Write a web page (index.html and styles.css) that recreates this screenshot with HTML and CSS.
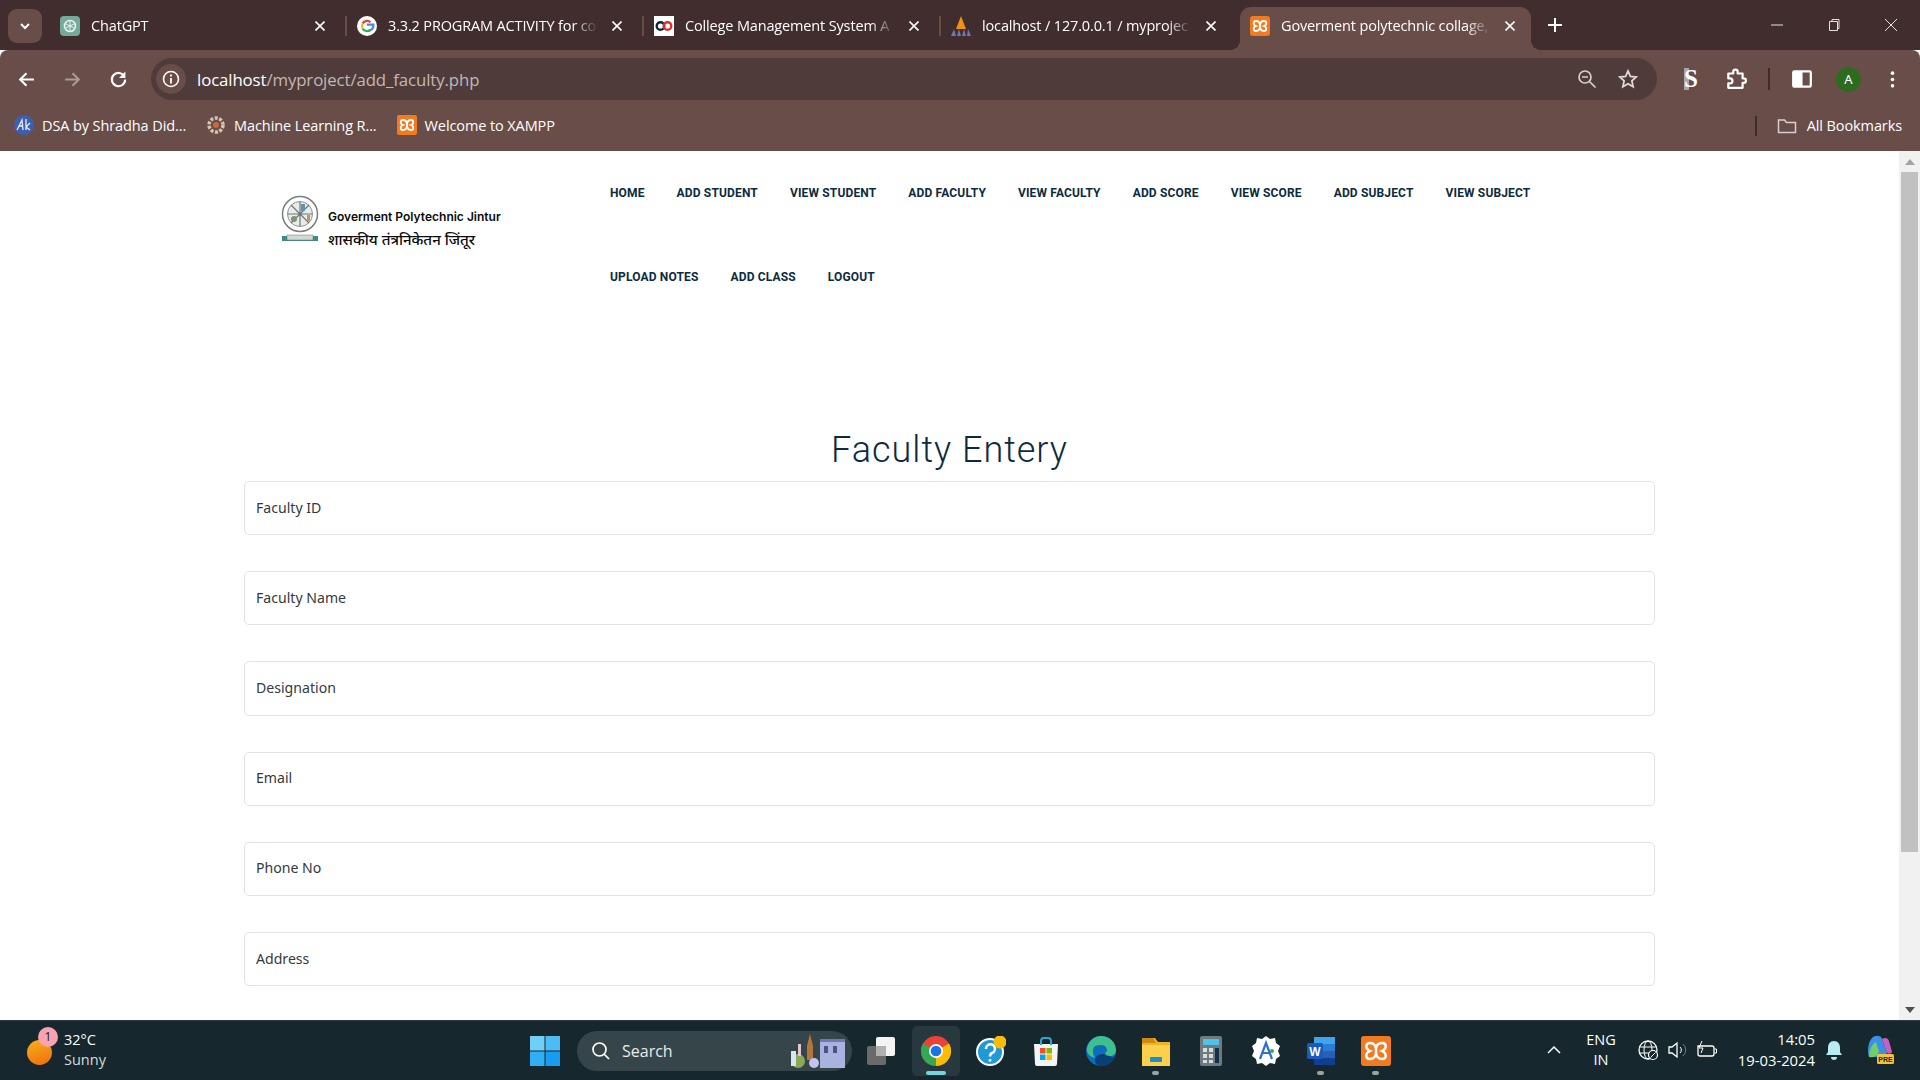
FILE: index.html
```html
<!DOCTYPE html>
<html lang="en">

<head>
  <meta charset="UTF-8">
  <meta name="viewport" content="width=device-width, initial-scale=1.0">
  <title>Faculty Entery</title>
  <link rel="stylesheet" href="styles.css">
</head>

<body>
  <div class="tabstrip">
    <div class="tab-search">
      <svg width="12" height="12" viewBox="0 0 12 12"><path d="M2 4l4 4 4-4" fill="none" stroke="#fff" stroke-width="2"/></svg>
    </div>
    <div class="tab">
      <svg class="fav" viewBox="0 0 20 20"><rect width="20" height="20" rx="4" fill="#74aa9c"/><circle cx="10" cy="10" r="5.500" fill="none" stroke="#e8f2ef" stroke-width="1.600"/><path d="M10 4.500v11M5 7.500l10 5M15 7.500l-10 5" stroke="#e8f2ef" stroke-width="1"/></svg>
      <span class="tab-title">ChatGPT</span>
      <svg class="tab-close" viewBox="0 0 10 10"><path d="M.5.500l9 9M9.500.500l-9 9" stroke="#fff" stroke-width="1.600"/></svg>
    </div>
    <div class="tab sep">
      <svg class="fav" viewBox="0 0 20 20"><circle cx="10" cy="10" r="10" fill="#fff"/><path d="M10 8.600h6.400c.4 3.800-2.400 6.400-6.200 6.400" fill="none" stroke="#4285f4" stroke-width="2.200"/><path d="M5.600 7.600A5 5 0 0 1 13.600 6.300" fill="none" stroke="#ea4335" stroke-width="2.200"/><path d="M5.600 7.600a5 5 0 0 0 0 4.800" fill="none" stroke="#fbbc05" stroke-width="2.200"/><path d="M5.600 12.400a5 5 0 0 0 7.800 1.400" fill="none" stroke="#34a853" stroke-width="2.200"/></svg>
      <span class="tab-title">3.3.2 PROGRAM ACTIVITY for co</span>
      <svg class="tab-close" viewBox="0 0 10 10"><path d="M.5.500l9 9M9.500.500l-9 9" stroke="#fff" stroke-width="1.600"/></svg>
    </div>
    <div class="tab sep">
      <svg class="fav" viewBox="0 0 20 20"><rect width="20" height="20" fill="#fff"/><circle cx="6.500" cy="10" r="3.800" fill="none" stroke="#10233f" stroke-width="2.400"/><circle cx="13.500" cy="10" r="3.800" fill="none" stroke="#d9302c" stroke-width="2.400"/></svg>
      <span class="tab-title">College Management System A</span>
      <svg class="tab-close" viewBox="0 0 10 10"><path d="M.5.500l9 9M9.500.500l-9 9" stroke="#fff" stroke-width="1.600"/></svg>
    </div>
    <div class="tab sep">
      <svg class="fav" viewBox="0 0 20 20"><path d="M10 0l5 13H5z" fill="#f29111"/><path d="M0 20l3-7 2 7zM6 20l2-7 2 7zM11 20l2-7 2 7zM16 20l1-7 3 7z" fill="#6c78af"/></svg>
      <span class="tab-title">localhost / 127.0.0.1 / myprojec</span>
      <svg class="tab-close" viewBox="0 0 10 10"><path d="M.5.500l9 9M9.500.500l-9 9" stroke="#fff" stroke-width="1.600"/></svg>
    </div>
    <div class="tab active">
      <svg class="fav" viewBox="0 0 20 20"><rect width="20" height="20" rx="3" fill="#f47a20"/><path d="M6 5c4 0 4 4 4 5s0 5 4 5M14 5c-4 0-4 4-4 5s0 5-4 5M6 5C3 5 3 9 6 10c-3 1-3 5 0 5M14 5c3 0 3 4 0 5 3 1 3 5 0 5" fill="none" stroke="#fff" stroke-width="1.800"/></svg>
      <span class="tab-title">Goverment polytechnic collage,</span>
      <svg class="tab-close" viewBox="0 0 10 10"><path d="M.5.500l9 9M9.500.500l-9 9" stroke="#fff" stroke-width="1.600"/></svg>
    </div>
    <div class="new-tab">
      <svg width="14" height="14" viewBox="0 0 14 14"><path d="M7 0v14M0 7h14" stroke="#fff" stroke-width="2"/></svg>
    </div>
    <div class="win-controls">
      <svg width="14" height="14" viewBox="0 0 14 14"><path d="M1 7h12" stroke="#e8e0df" stroke-width="1"/></svg>
      <svg width="14" height="14" viewBox="0 0 14 14"><path d="M2.500 3.500h8v9h-8zM5 3.500V1.500h7v9h-1.500" fill="none" stroke="#e8e0df" stroke-width="1"/></svg>
      <svg width="14" height="14" viewBox="0 0 14 14"><path d="M1 1l12 12M13 1L1 13" stroke="#e8e0df" stroke-width="1"/></svg>
    </div>
  </div>

  <div class="toolbar">
    <svg class="tool-icon" viewBox="0 0 18 18"><path d="M16 9H3M9 3L3 9l6 6" fill="none" stroke="#fff" stroke-width="2"/></svg>
    <svg class="tool-icon" viewBox="0 0 18 18"><path d="M2 9h13M9 3l6 6-6 6" fill="none" stroke="#a79a97" stroke-width="2"/></svg>
    <svg class="tool-icon reload" viewBox="0 0 18 18"><path d="M14.500 6A6.300 6.300 0 1 0 15.300 9" fill="none" stroke="#fff" stroke-width="2"/><path d="M15.500 1.500v6h-6z" fill="#fff"/></svg>
    <div class="omnibox">
      <div class="site-info">
        <svg width="18" height="18" viewBox="0 0 18 18"><circle cx="9" cy="9" r="7.500" fill="none" stroke="#fff" stroke-width="1.600"/><path d="M9 8v5.500M9 4.500v2" stroke="#fff" stroke-width="1.800"/></svg>
      </div>
      <div class="url"><span class="url-host">localhost</span>/myproject/add_faculty.php</div>
      <svg class="omni-icon" viewBox="0 0 20 20"><circle cx="8" cy="8" r="6" fill="none" stroke="#d8d0ce" stroke-width="1.700"/><path d="M12.500 12.500l6 6M5 8h6" stroke="#d8d0ce" stroke-width="1.700"/></svg>
      <svg class="omni-icon" viewBox="0 0 20 20"><path d="M10 2l2.400 5.400 5.800.6-4.300 3.900 1.200 5.800L10 14.700l-5.100 3 1.200-5.800L1.800 8l5.800-.6z" fill="none" stroke="#e0d8d6" stroke-width="1.800"/></svg>
    </div>
    <div class="toolbar-right">
      <span class="ext-s">S</span>
      <svg class="tool-icon puzzle" viewBox="0 0 20 20"><path d="M3 5h4.500V3.500a2 2 0 0 1 4 0V5H16v4.500h1a2 2 0 0 1 0 4h-1V18H3v-4h1.500a2.200 2.200 0 0 0 0-4.500H3z" fill="none" stroke="#fff" stroke-width="2" stroke-linejoin="round"/></svg>
      <span class="tool-sep"></span>
      <svg class="tool-icon panel" viewBox="0 0 20 20"><rect x="2" y="3" width="16" height="14" rx="1" fill="none" stroke="#fff" stroke-width="2"/><rect x="2" y="3" width="8.500" height="14" fill="#fff"/></svg>
      <span class="avatar">A</span>
      <svg class="tool-icon dots" viewBox="0 0 18 18"><circle cx="9" cy="3" r="1.700" fill="#fff"/><circle cx="9" cy="9" r="1.700" fill="#fff"/><circle cx="9" cy="15" r="1.700" fill="#fff"/></svg>
    </div>
  </div>

  <div class="bookmarks">
    <div class="bookmark">
      <svg class="fav" viewBox="0 0 20 20"><circle cx="10" cy="10" r="10" fill="#3d5fb0"/><path d="M3 15L8 5l1 10M5 11h4M12 4v11M16 8l-4 4 4 3" fill="none" stroke="#e8ecf6" stroke-width="1.300"/></svg>
      <span>DSA by Shradha Did...</span>
    </div>
    <div class="bookmark">
      <svg class="fav" viewBox="0 0 20 20"><circle cx="10" cy="10" r="7" fill="none" stroke="#d6c6b8" stroke-width="3.500" stroke-dasharray="3 1.500"/><circle cx="10" cy="10" r="3" fill="#c96a3a"/></svg>
      <span>Machine Learning R...</span>
    </div>
    <div class="bookmark">
      <svg class="fav" viewBox="0 0 20 20"><rect width="20" height="20" rx="2" fill="#f47a20"/><path d="M6 5c4 0 4 4 4 5s0 5 4 5M14 5c-4 0-4 4-4 5s0 5-4 5M6 5C3 5 3 9 6 10c-3 1-3 5 0 5M14 5c3 0 3 4 0 5 3 1 3 5 0 5" fill="none" stroke="#fff" stroke-width="1.800"/></svg>
      <span>Welcome to XAMPP</span>
    </div>
    <div class="all-bookmarks">
      <span class="bm-sep"></span>
      <svg width="20" height="20" viewBox="0 0 20 20"><path d="M1.500 4h6l2 2.500h9v10h-17z" fill="none" stroke="#d8d0ce" stroke-width="1.500"/></svg>
      <span>All Bookmarks</span>
    </div>
  </div>

  <div class="viewport">
    <main class="page">
      <header class="site-header">
        <div class="brand">
          <svg class="emblem" viewBox="0 0 38 48">
            <circle cx="19" cy="19" r="17.500" fill="#fff" stroke="#77807c" stroke-width="1.500"/>
            <circle cx="19" cy="19" r="12.500" fill="#e9ecea" stroke="#8b928e" stroke-width="1"/>
            <path d="M19 7v24M7 19h24M10 10l18 18M28 10L10 28" stroke="#6d7773" stroke-width="1.200"/>
            <circle cx="13" cy="24" r="3" fill="#7f9270"/>
            <rect x="20" y="9" width="4" height="7" fill="#5b93b5"/>
            <rect x="26" y="20" width="3" height="6" fill="#b99c5c"/>
            <path d="M1 41h36v5H1z" fill="#3f8a86"/>
            <rect x="6" y="40" width="26" height="5" fill="#d5d8d4" stroke="#6d7773" stroke-width=".5"/>
          </svg>
          <div class="brand-text">
            <div class="brand-en">Goverment Polytechnic Jintur</div>
            <div class="brand-hi">शासकीय तंत्रनिकेतन जिंतूर</div>
          </div>
        </div>
        <nav class="main-nav">
          <a href="#">Home</a>
          <a href="#">Add Student</a>
          <a href="#">View Student</a>
          <a href="#">Add Faculty</a>
          <a href="#">View Faculty</a>
          <a href="#">Add Score</a>
          <a href="#">View Score</a>
          <a href="#">Add Subject</a>
          <a href="#">View Subject</a>
          <a href="#">Upload Notes</a>
          <a href="#">Add Class</a>
          <a href="#">Logout</a>
        </nav>
      </header>

      <h1 class="form-title">Faculty Entery</h1>

      <form class="entry-form">
        <input class="form-control" type="text" placeholder="Faculty ID">
        <input class="form-control" type="text" placeholder="Faculty Name">
        <input class="form-control" type="text" placeholder="Designation">
        <input class="form-control" type="text" placeholder="Email">
        <input class="form-control" type="text" placeholder="Phone No">
        <input class="form-control" type="text" placeholder="Address">
      </form>
    </main>

    <div class="scrollbar">
      <div class="scroll-btn"><svg width="10" height="6" viewBox="0 0 10 6"><path d="M5 0l5 6H0z" fill="#a3a3a3"/></svg></div>
      <div class="scroll-track"><div class="scroll-thumb"></div></div>
      <div class="scroll-btn"><svg width="10" height="6" viewBox="0 0 10 6"><path d="M5 6l5-6H0z" fill="#505050"/></svg></div>
    </div>
  </div>

  <footer class="taskbar">
    <div class="weather">
      <div class="weather-icon"><span class="weather-badge">1</span></div>
      <div>
        <div>32°C</div>
        <div class="weather-sub">Sunny</div>
      </div>
    </div>

    <div class="task-center">
      <svg class="task-icon" viewBox="0 0 30 30"><rect width="14.500" height="14.500" fill="#6fd0f7"/><rect x="15.500" width="14.500" height="14.500" fill="#4cbcf5"/><rect y="15.500" width="14.500" height="14.500" fill="#2fb0f5"/><rect x="15.500" y="15.500" width="14.500" height="14.500" fill="#169cf0"/></svg>
      <div class="search-pill">
        <svg width="20" height="20" viewBox="0 0 20 20"><circle cx="8.500" cy="8.500" r="6.500" fill="none" stroke="#fff" stroke-width="1.700"/><path d="M13 13l5 5" stroke="#fff" stroke-width="1.700"/></svg>
        <span class="search-label">Search</span>
        <svg class="search-art" width="64" height="34" viewBox="0 0 64 34"><rect x="37" y="6" width="25" height="28" fill="#aab2e0"/><path d="M37 5h25v3H37z" fill="#6e7ab0"/><path d="M41 12h4v7h-4zM50 12h4v7h-4z" fill="#4a5480"/><path d="M27 0l3 12v14h-6V12z" fill="#b5763a"/><circle cx="15" cy="27" r="7" fill="#8aa95a"/><circle cx="31" cy="29" r="5" fill="#c4c4ef"/><rect x="8" y="17" width="5" height="15" fill="#dde3f4"/><rect x="15" y="10" width="3" height="12" fill="#e6c3d4"/></svg>
      </div>
      <div class="task-app">
        <svg class="task-icon" viewBox="0 0 30 30"><rect x="1" y="10" width="19" height="19" rx="2" fill="#6a6a6a"/><rect x="10" y="1" width="19" height="19" rx="2" fill="#f4f4f4"/><rect x="10" y="10" width="10" height="10" fill="#b0b0b0"/></svg>
      </div>
      <div class="task-app current">
        <svg class="task-icon" viewBox="0 0 30 30"><circle cx="15" cy="15" r="15" fill="#ea4335"/><path d="M15 15L28 7.500A15 15 0 0 1 15 30z" fill="#fbbc05"/><path d="M15 15v15A15 15 0 0 1 2 7.500z" fill="#34a853"/><circle cx="15" cy="15" r="7" fill="#fff"/><circle cx="15" cy="15" r="5.300" fill="#1a73e8"/></svg>
      </div>
      <div class="task-app">
        <svg class="task-icon" viewBox="0 0 30 30"><circle cx="14" cy="16" r="13" fill="#1f9ad6" stroke="#fff" stroke-width="2"/><path d="M10 13a4.500 4.500 0 1 1 6 4c-1.500.7-2 1.500-2 3.500M14 23v2.500" fill="none" stroke="#fff" stroke-width="2.500"/><circle cx="24" cy="6" r="6.500" fill="#fbbc05"/></svg>
      </div>
      <div class="task-app">
        <svg class="task-icon" viewBox="0 0 30 30"><path d="M3 8h24l-1 20a2 2 0 0 1-2 2H6a2 2 0 0 1-2-2z" fill="#f4f4f4"/><path d="M10 9V5a3 3 0 0 1 3-3h4a3 3 0 0 1 3 3v4" fill="none" stroke="#27a7d8" stroke-width="2"/><rect x="9" y="12" width="5.500" height="5.500" fill="#f25022"/><rect x="15.500" y="12" width="5.500" height="5.500" fill="#7fba00"/><rect x="9" y="18.500" width="5.500" height="5.500" fill="#00a4ef"/><rect x="15.500" y="18.500" width="5.500" height="5.500" fill="#ffb900"/></svg>
      </div>
      <div class="task-app">
        <svg class="task-icon" viewBox="0 0 30 30"><circle cx="15" cy="15" r="15" fill="#0f6cbd"/><path d="M30 17c-1 8-7 13-14 13-4 0-7-2-7-6 0-3 3-6 8-6 4 0 6 1 8 3 3 1 4-2 5-4z" fill="#0b3f78"/><path d="M1 12C3 4 9 0 15 0c8 0 15 6 15 14 0 4-3 6-6 6-3 0-5-1-5-3 4-1 2-8-4-8S7 11 7 15c0 2 .500 5 2 7C4 21 0 17 1 12z" fill="#3dc08e"/></svg>
      </div>
      <div class="task-app dot">
        <svg class="task-icon" viewBox="0 0 30 30"><path d="M1 2h13l3 4h12v24H1z" fill="#f0b429"/><path d="M1 2h11l3 5H1z" fill="#d08a14"/><rect x="1" y="9" width="28" height="21" fill="#fbd04b"/><rect x="9" y="21" width="12" height="5" rx="1" fill="#1b8ed1"/></svg>
      </div>
      <div class="task-app">
        <svg class="task-icon" viewBox="0 0 30 30"><rect x="4" y="0" width="22" height="30" rx="2" fill="#6e7a80"/><rect x="7" y="3" width="16" height="6" fill="#4cc3e8"/><path d="M7 12h4v4H7zM13 12h4v4h-4zM7 18h4v4H7zM13 18h4v4h-4zM7 24h4v3H7zM13 24h4v3h-4z" fill="#d9dcde"/><rect x="19" y="12" width="4" height="15" fill="#11314a"/></svg>
      </div>
      <div class="task-app">
        <svg class="task-icon" viewBox="0 0 30 30"><path d="M15 0l4 3 5-1 1 5 4 3-2 5 2 5-4 3-1 5-5-1-4 3-4-3-5 1-1-5-4-3 2-5-2-5 4-3 1-5 5 1z" fill="#fff"/><circle cx="15" cy="15" r="10" fill="#fff"/><path d="M9 23l6-16 6 16M11 17h8" fill="none" stroke="#2f6fd0" stroke-width="2.200"/><circle cx="21" cy="15" r="2" fill="#3aa655"/></svg>
      </div>
      <div class="task-app dot">
        <svg class="task-icon" viewBox="0 0 30 30"><rect x="8" y="1" width="21" height="28" rx="2" fill="#2b7cd3"/><rect x="8" y="1" width="21" height="7" fill="#41a5ee"/><rect x="8" y="15" width="21" height="7" fill="#2b5fb3"/><rect x="8" y="22" width="21" height="7" fill="#103f91"/><rect x="1" y="7" width="16" height="16" rx="1.500" fill="#185abd"/><text x="9" y="19.500" text-anchor="middle" class="word-w">W</text></svg>
      </div>
      <div class="task-app dot">
        <svg class="task-icon" viewBox="0 0 30 30"><rect width="30" height="30" rx="3" fill="#f47a20"/><path d="M9 7c6 0 6 5 6 8s0 8 6 8M21 7c-6 0-6 5-6 8s0 8-6 8M9 7c-5 0-5 6 0 8-5 2-5 8 0 8M21 7c5 0 5 6 0 8 5 2 5 8 0 8" fill="none" stroke="#fff" stroke-width="2.400"/></svg>
      </div>
    </div>

    <div class="tray">
      <svg class="tray-chevron" width="14" height="10" viewBox="0 0 14 10"><path d="M1 8l6-6 6 6" fill="none" stroke="#fff" stroke-width="1.500"/></svg>
      <div class="lang">ENG<br>IN</div>
      <svg width="22" height="22" viewBox="0 0 22 22"><circle cx="11" cy="11" r="9" fill="none" stroke="#fff" stroke-width="1.300"/><ellipse cx="11" cy="11" rx="4" ry="9" fill="none" stroke="#fff"/><path d="M2 8h18M2 14h18" stroke="#fff"/><circle cx="16" cy="16" r="4.500" fill="#16282e" stroke="#fff" stroke-width="1.200"/><path d="M13.500 18.500l5-5" stroke="#fff"/></svg>
      <svg width="20" height="20" viewBox="0 0 20 20"><path d="M2 7h3l5-4v14l-5-4H2z" fill="none" stroke="#fff" stroke-width="1.300"/><path d="M13 7a4 4 0 0 1 0 6" fill="none" stroke="#fff"/><path d="M16 4a8 8 0 0 1 0 12" fill="none" stroke="#6b7a7e"/></svg>
      <svg width="22" height="20" viewBox="0 0 22 20"><path d="M3 6h14a2 2 0 0 1 2 2v6a2 2 0 0 1-2 2H5a2 2 0 0 1-2-2z" fill="none" stroke="#fff" stroke-width="1.300"/><path d="M19.500 9h2v4h-2M7 1L4 8h4l-2 5" fill="none" stroke="#fff"/></svg>
      <div class="clock">14:05<br>19-03-2024</div>
      <svg width="20" height="22" viewBox="0 0 20 22"><path d="M10 2c4 0 6 3 6 7v4l2 3H2l2-3V9c0-4 2-7 6-7z" fill="#b6ecf2"/><path d="M7 18a3 3 0 0 0 6 0z" fill="#b6ecf2"/></svg>
      <svg class="copilot" width="32" height="32" viewBox="0 0 32 32"><path d="M8 4c3-3 9-3 10 1l5 14c-2 4-6 5-10 4H5C3 18 4 8 8 4z" fill="#3b8fe6"/><path d="M18 5c3-2 6-1 7 2l3 11c-1 2-3 2-5 1z" fill="#c65fc0"/><path d="M5 23c0-7 3-13 7-15l3 10c-2 4-5 6-10 5z" fill="#6fd06a"/><rect x="13" y="20" width="17" height="10" rx="1.500" fill="#f4c430"/><text x="21.500" y="28" text-anchor="middle" class="copilot-pre">PRE</text></svg>
    </div>
  </footer>
</body>

</html>
```

FILE: styles.css
```css
html,
body {
  height: 100%;
}

body {
  margin: 0;
  display: flex;
  flex-direction: column;
  height: 100vh;
  overflow: hidden;
  font-family: "Noto Sans", "Open Sans", sans-serif;
  background: #fff;
}

/* browser chrome */
.tabstrip {
  height: 50px;
  flex: none;
  display: flex;
  align-items: flex-end;
  background: #412d2d;
  color: #fff;
  font-size: 15px;
  padding-left: 8px;
}

.tab-search {
  width: 34px;
  height: 34px;
  margin: 0 6px 7px 0;
  border-radius: 9px;
  background: #694d48;
  display: flex;
  align-items: center;
  justify-content: center;
}

.tab {
  position: relative;
  width: 297px;
  height: 43px;
  flex: none;
  display: flex;
  align-items: center;
  padding: 0 17px 0 12px;
  box-sizing: border-box;
  gap: 11px;
}

.tab.sep::before {
  content: "";
  position: absolute;
  left: 0;
  top: 9px;
  height: 20px;
  width: 2px;
  background: #694d48;
}

.tab.active {
  width: 291px;
  background: #694d48;
  border-radius: 11px 11px 0 0;
  margin-left: 4px;
  padding: 0 13px 0 10px;
}

/* the little flares where the active tab meets the toolbar */
.tab.active::before,
.tab.active::after {
  content: "";
  position: absolute;
  bottom: 0;
  width: 10px;
  height: 10px;
}

.tab.active::before {
  left: -10px;
  background: radial-gradient(circle at 0 0, transparent 10px, #694d48 10px);
}

.tab.active::after {
  right: -10px;
  background: radial-gradient(circle at 100% 0, transparent 10px, #694d48 10px);
}

.fav {
  width: 20px;
  height: 20px;
  flex: none;
}

.tab .fav {
  margin-bottom: 6px;
}

.tab-title {
  flex: 1;
  min-width: 0;
  white-space: nowrap;
  overflow: hidden;
  font-family: "Open Sans", sans-serif;
  font-size: 14.5px;
  letter-spacing: -0.15px;
  margin-bottom: 6px;
  mask-image: linear-gradient(to right, #000 88%, transparent 100%);
}

.tab:first-of-type .tab-title {
  mask-image: none;
}

.tab-close {
  width: 10px;
  height: 10px;
  flex: none;
  margin: 0 3px 6px;
}

.new-tab {
  margin: 0 0 12px 17px;
  display: flex;
  height: 26px;
  align-items: center;
}

.win-controls {
  margin-left: auto;
  width: 150px;
  height: 50px;
  display: flex;
  align-items: center;
  justify-content: space-between;
  padding-right: 22px;
  box-sizing: border-box;
}

.toolbar {
  height: 50px;
  flex: none;
  display: flex;
  align-items: center;
  background: #694d48;
  padding: 8px 0 0 17px;
  box-sizing: border-box;
  border-radius: 8px 8px 0 0;
}

.tool-icon {
  width: 19px;
  height: 19px;
  flex: none;
  margin-right: 27px;
}

.tool-icon.reload {
  margin-right: 23px;
}

.omnibox {
  width: 1506px;
  height: 42px;
  flex: none;
  display: flex;
  align-items: center;
  background: #4f3c3a;
  border-radius: 21px;
  color: #fff;
  box-sizing: border-box;
  padding-right: 19px;
}

.site-info {
  width: 30px;
  height: 30px;
  margin-left: 5px;
  border-radius: 50%;
  background: #694d48;
  display: flex;
  align-items: center;
  justify-content: center;
}

.url {
  flex: 1;
  margin-left: 11px;
  font-family: "Open Sans", sans-serif;
  font-size: 16.8px;
  letter-spacing: -0.1px;
  color: #c3b7b5;
}

.url-host {
  color: #fff;
}

.omni-icon {
  width: 20px;
  height: 20px;
  margin-left: 21px;
}

.toolbar-right {
  flex: 1;
  display: flex;
  align-items: center;
  padding-left: 27px;
}

.toolbar-right .tool-icon {
  margin-right: 0;
}

.ext-s {
  font-family: "Liberation Serif", serif;
  font-weight: 700;
  font-size: 25px;
  line-height: 22px;
  width: 14px;
  text-align: center;
  color: #fff;
  background: linear-gradient(90deg, #a9a9a9 35%, transparent 35%);
}

.toolbar-right .puzzle {
  margin-left: 27px;
  width: 22px;
  height: 22px;
}

.tool-sep {
  width: 2px;
  height: 22px;
  background: #3e2c2b;
  margin-left: 21px;
}

.toolbar-right .panel {
  margin-left: 21px;
  width: 22px;
  height: 22px;
}

.avatar {
  width: 25px;
  height: 25px;
  margin-left: 23px;
  border-radius: 50%;
  background: #2e6b1f;
  color: #fff;
  font-size: 13px;
  display: flex;
  align-items: center;
  justify-content: center;
}

.toolbar-right .dots {
  margin-left: 22px;
}

.bookmarks {
  height: 51px;
  flex: none;
  display: flex;
  align-items: center;
  background: #694d48;
  color: #fff;
  font-family: "Open Sans", sans-serif;
  font-size: 14.5px;
  letter-spacing: -0.1px;
  padding: 0 18px 0 14px;
  box-sizing: border-box;
}

.bookmark {
  display: flex;
  align-items: center;
  gap: 8px;
  margin-right: 20px;
  padding-bottom: 1px;
}

.all-bookmarks {
  margin-left: auto;
  display: flex;
  align-items: center;
  gap: 10px;
}

.bm-sep {
  width: 2px;
  height: 20px;
  background: #3e2c2b;
  margin-right: 10px;
}

/* page */
.viewport {
  flex: 1;
  min-height: 0;
  display: flex;
  background: #fff;
}

.page {
  flex: 1;
  min-width: 0;
  overflow: hidden;
  padding: 0 244px;
  box-sizing: border-box;
  color: #0c2b40;
}

.site-header {
  display: flex;
  height: 241px;
}

.brand {
  width: 366px;
  flex: none;
  display: flex;
  align-items: flex-start;
  padding: 44px 0 0 37px;
  box-sizing: border-box;
  gap: 9px;
}

.emblem {
  width: 38px;
  height: 48px;
  flex: none;
}

.brand-text {
  padding-top: 14px;
  color: #0b0b0b;
}

.brand-en {
  font-family: Inter, sans-serif;
  font-weight: 600;
  font-size: 12px;
  line-height: 16px;
  white-space: nowrap;
}

.brand-hi {
  font-family: "Noto Sans", sans-serif;
  font-size: 15px;
  font-weight: 500;
  line-height: 24px;
  margin-top: 2px;
  white-space: nowrap;
}

.main-nav {
  width: 960px;
  flex: none;
  display: flex;
  flex-wrap: wrap;
  align-content: flex-start;
  column-gap: 32px;
  row-gap: 68px;
  padding-top: 34px;
  font-family: Roboto, sans-serif;
}

.main-nav a {
  color: #0c2b40;
  text-decoration: none;
  text-transform: uppercase;
  font-size: 12px;
  font-weight: 700;
  letter-spacing: 0.15px;
  line-height: 16px;
  white-space: nowrap;
}

.form-title {
  margin: 0;
  height: 89px;
  box-sizing: border-box;
  display: flex;
  align-items: flex-end;
  justify-content: center;
  padding-bottom: 8px;
  font-family: Roboto, sans-serif;
  font-weight: 300;
  font-size: 36px;
  letter-spacing: 1px;
  line-height: 46px;
}

.entry-form {
  display: flex;
  flex-direction: column;
  gap: 36px;
}

.form-control {
  height: 54.2px;
  width: 100%;
  box-sizing: border-box;
  border: 1px solid #e1e3ea;
  border-radius: 5px;
  padding: 0 11px 2px;
  font-family: "Noto Sans", sans-serif;
  font-size: 14.1px;
  background: #fff;
  outline: none;
}

.form-control::placeholder {
  color: #343a40;
  opacity: 1;
}

/* scrollbar */
.scrollbar {
  width: 21px;
  flex: none;
  display: flex;
  flex-direction: column;
  align-items: center;
  background: #f1f1f1;
}

.scroll-btn {
  height: 21px;
  flex: none;
  display: flex;
  align-items: center;
  justify-content: center;
}

.scroll-track {
  flex: 1;
  width: 17px;
}

.scroll-thumb {
  height: 680px;
  background: #c1c1c1;
}

/* taskbar */
.taskbar {
  height: 60px;
  flex: none;
  display: flex;
  align-items: center;
  background: #16282e;
  border-top: 1px solid #2c3c42;
  box-sizing: border-box;
  color: #fff;
  font-family: "Open Sans", sans-serif;
  font-size: 14.5px;
}

.weather {
  display: flex;
  align-items: center;
  gap: 12px;
  padding: 0 0 2px 27px;
  width: 530px;
  box-sizing: border-box;
  line-height: 20px;
  flex: none;
}

.weather-icon {
  position: relative;
  width: 25px;
  height: 25px;
  border-radius: 50%;
  background: linear-gradient(160deg, #f7b21b, #ef6c0d);
  margin-top: 6px;
}

.weather-badge {
  position: absolute;
  top: -13px;
  left: 11px;
  width: 20px;
  height: 20px;
  border-radius: 50%;
  background: #f8a3ad;
  color: #222;
  font-size: 12px;
  text-align: center;
}

.weather-sub {
  color: #d6dadb;
}

.task-center {
  display: flex;
  align-items: center;
  flex: none;
}

.task-icon {
  width: 30px;
  height: 30px;
  flex: none;
}

.search-pill {
  width: 275px;
  height: 40px;
  margin: 0 5px 0 17px;
  box-sizing: border-box;
  padding-left: 14px;
  display: flex;
  align-items: center;
  gap: 11px;
  border-radius: 20px;
  background: #364549;
  font-size: 16px;
  color: #e8ebeb;
}

.search-label {
  flex: 1;
}

.search-art {
  margin-right: 5px;
}

.task-app {
  position: relative;
  width: 48px;
  height: 50px;
  margin-right: 7px;
  display: flex;
  align-items: center;
  justify-content: center;
  border-radius: 5px;
}

.task-app.current {
  background: #27383e;
}

.task-app.current::after,
.task-app.dot::after {
  content: "";
  position: absolute;
  bottom: 1px;
  left: 20px;
  width: 7px;
  height: 4px;
  border-radius: 2px;
  background: #9aa3a6;
}

.task-app.current::after {
  left: 14px;
  width: 20px;
  background: #76d4de;
}

.word-w {
  font-family: "Liberation Sans", sans-serif;
  font-weight: 700;
  font-size: 12px;
  fill: #fff;
}

.copilot-pre {
  font-family: "Liberation Sans", sans-serif;
  font-weight: 700;
  font-size: 7px;
  fill: #222;
}

.tray {
  margin-left: auto;
  display: flex;
  align-items: center;
  padding: 0 24px 2px 0;
  font-size: 14.8px;
  line-height: 21px;
}

.tray-chevron {
  margin-right: 25px;
}

.lang {
  text-align: center;
  margin-right: 21px;
  line-height: 20px;
  font-size: 14.5px;
}

.tray svg:nth-of-type(3),
.tray svg:nth-of-type(4) {
  margin-left: 8px;
}

.clock {
  text-align: right;
  margin: 0 9px 0 21px;
  white-space: nowrap;
}

.copilot {
  margin-left: 20px;
}
```
